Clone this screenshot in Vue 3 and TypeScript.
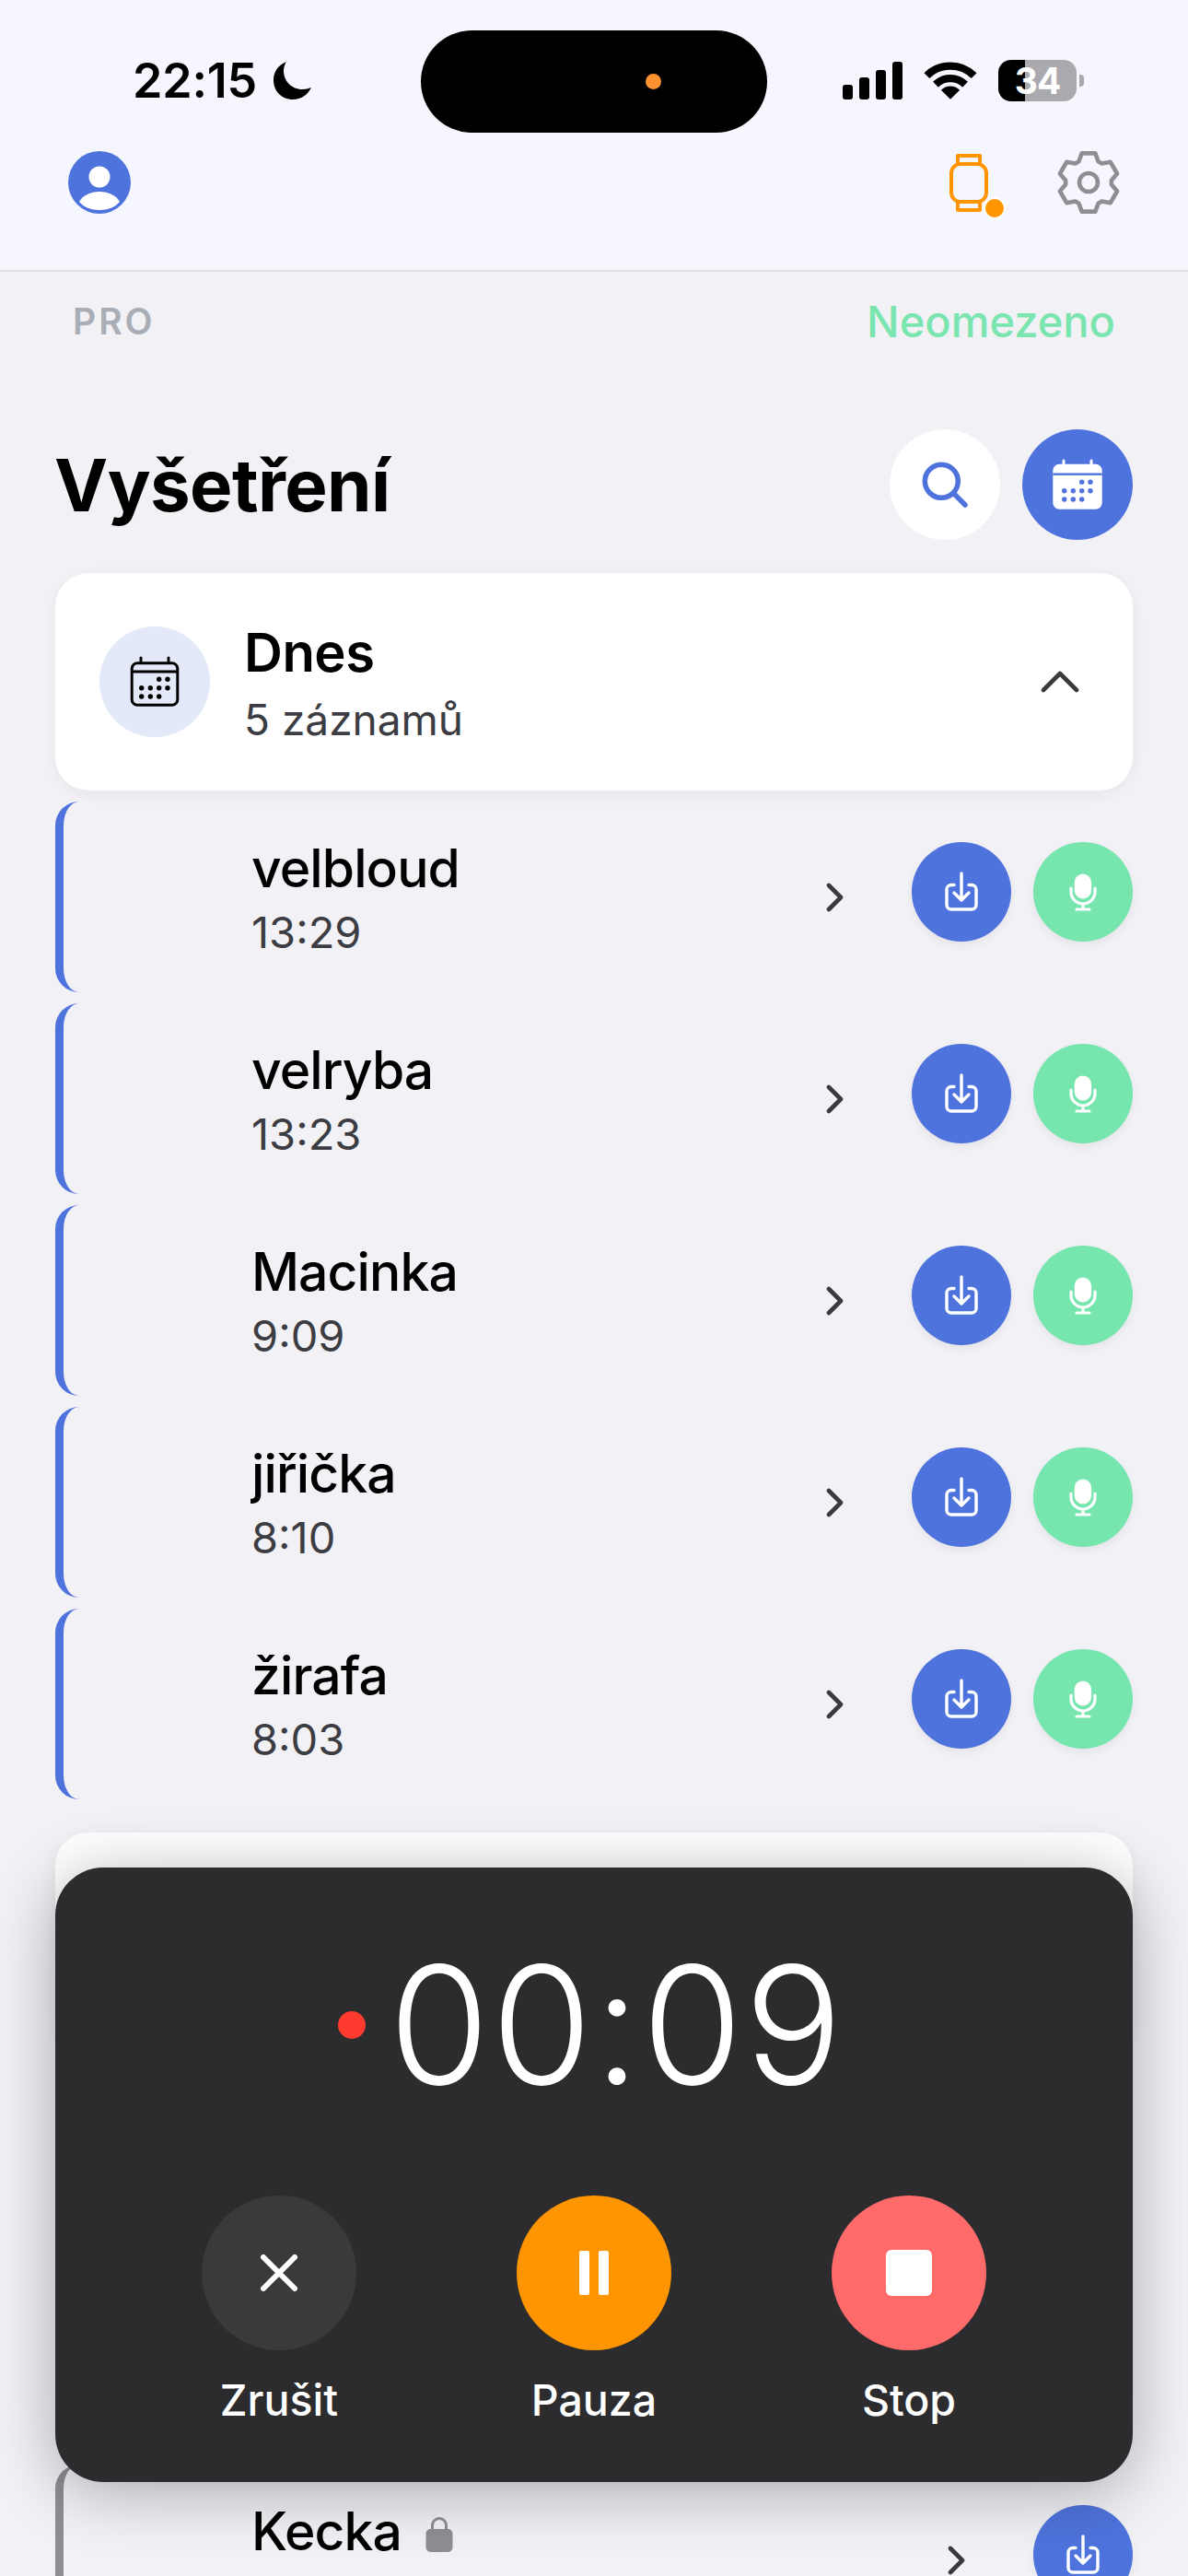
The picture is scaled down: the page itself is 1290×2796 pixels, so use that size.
<script setup lang="ts">
type Visit = { name: string; time: string; locked?: boolean }

const todayVisits: Visit[] = [
  { name: 'velbloud', time: '13:29' },
  { name: 'velryba', time: '13:23' },
  { name: 'Macinka', time: '9:09' },
  { name: 'jiřička', time: '8:10' },
  { name: 'žirafa', time: '8:03' },
]

const calendarDots = [
  [64.7, 57.3], [74, 57.3],
  [45.7, 66.7], [55.3, 66.7], [64.7, 66.7], [74, 66.7],
  [45.7, 76], [55.3, 76], [64.7, 76],
]

const polar = (deg: number, r: number) => {
  const a = ((deg - 90) * Math.PI) / 180
  return `${(40 + r * Math.cos(a)).toFixed(2)} ${(40 + r * Math.sin(a)).toFixed(2)}`
}

// six toothed cog, same outline all the way round
const gearPath = [0, 60, 120, 180, 240, 300]
  .map((a, i) => {
    const start = polar(a - 25, 25)
    return `${i === 0 ? 'M' : 'L'}${start} L${polar(a - 13, 32.5)} L${polar(a + 13, 32.5)} L${polar(a + 25, 25)}`
  })
  .join(' ') + ' Z'
</script>

<template>
  <div class="screen">
    <header class="top">
      <div class="island"><span class="island-dot"></span></div>
      <div class="status">
        <div class="clock">
          <span>22:15</span>
          <svg class="moon" viewBox="0 0 43 42" width="43" height="42">
            <path d="M15 1C5 5 1 13 1 21c0 12 9 21 21 21 9 0 16-5 20-13-3 1-6 2-10 2-11 0-20-9-20-20 0-4 1-7 3-10z" fill="#000" />
          </svg>
        </div>
        <div class="sys">
          <div class="signal">
            <i style="height: 16px"></i>
            <i style="height: 24px"></i>
            <i style="height: 32px"></i>
            <i style="height: 41px"></i>
          </div>
          <svg viewBox="0 0 60 44" width="58" height="43">
            <path d="M3.5 16.5a37.5 37.5 0 0 1 53 0M13.4 26.4a23.5 23.5 0 0 1 33.2 0" fill="none" stroke="#000" stroke-width="8.5" />
            <path d="M30 43 19.5 32.5a14.8 14.8 0 0 1 21 0z" fill="#000" />
          </svg>
          <div class="battery-wrap">
            <div class="battery">34</div>
            <span class="battery-tip"></span>
          </div>
        </div>
      </div>
      <div class="nav">
        <svg viewBox="0 0 68 70" width="68" height="70">
          <circle cx="34" cy="35" r="34" fill="#4f73dd" />
          <circle cx="34" cy="29" r="11.5" fill="#fff" />
          <path d="M12 56c4-7 12-11 22-11s18 4 22 11c-5 6-13 9-22 9s-17-3-22-9z" fill="#fff" />
        </svg>
        <div class="nav-right">
          <div class="watch">
            <svg viewBox="0 0 42 63" width="42" height="63" fill="none" stroke="#ff9500" stroke-width="4" stroke-linejoin="round">
              <path d="M9 11V2h24v9M9 52v9h24v-9" />
              <rect x="2" y="11" width="38" height="41" rx="10" />
            </svg>
            <span class="watch-dot"></span>
          </div>
          <svg viewBox="0 0 80 80" width="80" height="80" class="gear" fill="none" stroke="#8e8e93" stroke-width="4.6" stroke-linejoin="round">
            <path :d="gearPath" />
            <circle cx="40" cy="40" r="10" />
          </svg>
        </div>
      </div>
    </header>

    <div class="plan">
      <span class="plan-name">PRO</span>
      <span class="plan-state">Neomezeno</span>
    </div>

    <div class="title-row">
      <h1>Vyšetření</h1>
      <div class="title-actions">
        <button class="round white" type="button">
          <svg viewBox="0 0 120 120" width="120" height="120" fill="none" stroke="#4f73dd" stroke-width="5.5" stroke-linecap="round">
            <circle cx="56.3" cy="56.3" r="18" />
            <path d="M69.5 69.5 82 82" />
          </svg>
        </button>
        <button class="round blue" type="button">
          <svg viewBox="0 0 120 120" width="120" height="120">
            <path d="M45 39v-5M75 39v-5" stroke="#fff" stroke-width="3" stroke-linecap="round" />
            <rect x="33.3" y="37.7" width="53.4" height="49" rx="7" fill="#fff" />
            <rect x="33.3" y="47.5" width="53.4" height="2.4" fill="#4f73dd" />
            <circle v-for="d in calendarDots" :key="d.join()" :cx="d[0]" :cy="d[1]" r="2.7" fill="#4f73dd" />
          </svg>
        </button>
      </div>
    </div>

    <section class="day-card">
      <div class="day-icon">
        <svg viewBox="0 0 120 120" width="120" height="120">
          <path d="M45 39v-5M75 39v-5" stroke="#000" stroke-width="3" stroke-linecap="round" />
          <rect x="35.2" y="39.8" width="49.6" height="45.4" rx="6" fill="none" stroke="#000" stroke-width="3" />
          <rect x="35" y="47.5" width="50" height="3" fill="#000" />
          <circle v-for="d in calendarDots" :key="d.join()" :cx="d[0]" :cy="d[1]" r="2.7" fill="#000" />
        </svg>
      </div>
      <div class="day-text">
        <div class="day-name">Dnes</div>
        <div class="day-count">5 záznamů</div>
      </div>
      <svg viewBox="0 0 42 24" width="42" height="24" fill="none" stroke="#3a3a3c" stroke-width="4.6" stroke-linecap="round" stroke-linejoin="round">
        <path d="M3 21 21 3l18 18" />
      </svg>
    </section>

    <div class="visits">
      <article v-for="v in todayVisits" :key="v.name" class="visit">
        <div class="visit-text">
          <div class="visit-name">{{ v.name }}</div>
          <div class="visit-time">{{ v.time }}</div>
        </div>
        <svg class="chevron" viewBox="0 0 20 32" width="20" height="32" fill="none" stroke="#3a3a3c" stroke-width="4.6" stroke-linecap="round" stroke-linejoin="round">
          <path d="M3 3l13 13L3 29" />
        </svg>
        <div class="visit-actions">
          <button class="small blue" type="button">
            <svg viewBox="0 0 108 108" width="108" height="108" fill="none" stroke="#fff" stroke-width="3.4" stroke-linecap="round" stroke-linejoin="round">
              <path d="M46 46.5h-3a5 5 0 0 0-5 5V68a5 5 0 0 0 5 5h22a5 5 0 0 0 5-5V51.5a5 5 0 0 0-5-5h-3" />
              <path d="M54 34v29M46 55l8 8 8-8" />
            </svg>
          </button>
          <button class="small green" type="button">
            <svg viewBox="0 0 108 108" width="108" height="108" fill="none" stroke="#fff" stroke-width="3.2" stroke-linecap="round">
              <rect x="44.7" y="34.5" width="18.4" height="27" rx="9.2" fill="#fff" stroke="none" />
              <path d="M41 50v4a13 13 0 0 0 26 0v-4M54 67v6M47 73h14" />
            </svg>
          </button>
        </div>
      </article>
    </div>

    <section class="day-card"></section>

    <div class="visits-covered"></div>

    <article class="visit locked">
      <div class="visit-text">
        <div class="visit-name">
          Kecka
          <svg class="lock" viewBox="0 0 30 40" width="30" height="40">
            <path d="M7.5 18v-7a7.5 7.5 0 0 1 15 0v7" fill="none" stroke="#8e8e93" stroke-width="3" />
            <rect x="0.5" y="15" width="29" height="25" rx="5" fill="#8e8e93" />
          </svg>
        </div>
        <div class="visit-time">&nbsp;</div>
      </div>
      <svg class="chevron" viewBox="0 0 20 32" width="20" height="32" fill="none" stroke="#3a3a3c" stroke-width="4.6" stroke-linecap="round" stroke-linejoin="round">
        <path d="M3 3l13 13L3 29" />
      </svg>
      <div class="visit-actions">
        <button class="small blue" type="button">
          <svg viewBox="0 0 108 108" width="108" height="108" fill="none" stroke="#fff" stroke-width="3.4" stroke-linecap="round" stroke-linejoin="round">
            <path d="M46 46.5h-3a5 5 0 0 0-5 5V68a5 5 0 0 0 5 5h22a5 5 0 0 0 5-5V51.5a5 5 0 0 0-5-5h-3" />
            <path d="M54 34v29M46 55l8 8 8-8" />
          </svg>
        </button>
      </div>
    </article>

    <div class="recorder">
      <div class="timer">
        <span class="rec-dot"></span>
        <span class="timer-digits">00:09</span>
      </div>
      <div class="controls">
        <div class="control">
          <button class="ctl cancel" type="button">
            <svg viewBox="0 0 40 40" width="40" height="40" fill="none" stroke="#fff" stroke-width="6" stroke-linecap="round">
              <path d="M3 3l34 34M37 3 3 37" />
            </svg>
          </button>
          <span>Zrušit</span>
        </div>
        <div class="control">
          <button class="ctl pause" type="button">
            <i></i>
            <i></i>
          </button>
          <span>Pauza</span>
        </div>
        <div class="control">
          <button class="ctl stop" type="button"><i></i></button>
          <span>Stop</span>
        </div>
      </div>
    </div>
  </div>
</template>

<style>
html,
body {
  margin: 0;
  background: #f2f2f7;
}
</style>

<style scoped>
.screen {
  position: relative;
  width: 1290px;
  height: 2796px;
  overflow: hidden;
  background: #f1f1f6;
  font-family: Inter, "Noto Sans", sans-serif;
  color: #000;
}

button {
  border: 0;
  padding: 0;
  display: flex;
  align-items: center;
  justify-content: center;
  border-radius: 50%;
}

.top {
  position: relative;
  box-sizing: border-box;
  height: 295px;
  padding-top: 55px;
  background: #f6f6fe;
  border-bottom: 2px solid #dfdfe3;
}

.island {
  position: absolute;
  left: 457px;
  top: 33px;
  width: 376px;
  height: 111px;
  border-radius: 56px;
  background: #000;
}

.island-dot {
  position: absolute;
  left: 244px;
  top: 47px;
  width: 17px;
  height: 17px;
  border-radius: 50%;
  background: #ff9230;
}

.status {
  display: flex;
  justify-content: space-between;
  align-items: center;
  height: 64px;
  padding: 0 113px 0 144px;
}

.clock {
  display: flex;
  align-items: center;
  gap: 17px;
  font-size: 52px;
  font-weight: 600;
  letter-spacing: -0.2px;
}

.sys {
  display: flex;
  align-items: center;
  gap: 23px;
}

.signal {
  display: flex;
  align-items: flex-end;
  gap: 7px;
  height: 41px;
  margin-top: 1px;
}

.signal i {
  width: 11px;
  border-radius: 3px;
  background: #000;
}

.battery-wrap {
  display: flex;
  align-items: center;
  gap: 3px;
}

.battery {
  width: 85px;
  height: 45px;
  border-radius: 14px;
  background: linear-gradient(90deg, #000 34%, #aaaaae 34%);
  color: #fff;
  font-size: 39px;
  font-weight: 700;
  line-height: 45px;
  text-align: center;
  letter-spacing: -1px;
}

.battery-tip {
  width: 5px;
  height: 13px;
  border-radius: 0 4px 4px 0;
  background: #aaaaae;
}

.nav {
  display: flex;
  justify-content: space-between;
  align-items: center;
  height: 70px;
  margin-top: 44px;
  padding: 0 68px 0 74px;
}

.nav-right {
  display: flex;
  align-items: center;
  gap: 69px;
}

.watch {
  position: relative;
  width: 42px;
  height: 63px;
}

.watch-dot {
  position: absolute;
  left: 39px;
  top: 49px;
  width: 20px;
  height: 20px;
  border-radius: 50%;
  background: #ff9500;
  box-shadow: 0 0 0 2px #fff;
}

.plan {
  display: flex;
  justify-content: space-between;
  align-items: center;
  height: 44px;
  margin-top: 31px;
  padding: 0 79px;
}

.plan-name {
  font-size: 39px;
  font-weight: 600;
  letter-spacing: 3px;
  color: #a9adb5;
}

.plan-state {
  font-size: 47px;
  font-weight: 500;
  color: #7be5b0;
}

.title-row {
  display: flex;
  justify-content: space-between;
  align-items: center;
  height: 120px;
  margin-top: 96px;
  padding: 0 60px 0 59px;
}

h1 {
  margin: 0;
  font-size: 78px;
  font-weight: 700;
  letter-spacing: -0.6px;
}

.title-actions {
  display: flex;
  gap: 24px;
}

.round {
  width: 120px;
  height: 120px;
}

.white {
  background: #fff;
}

.blue {
  background: #4f73dd;
}

.green {
  background: #76e5ae;
}

.day-card {
  display: flex;
  align-items: center;
  box-sizing: border-box;
  height: 236px;
  margin: 36px 60px 0;
  padding: 0 58px 0 48px;
  border-radius: 36px;
  background: #fff;
  box-shadow: 0 4px 18px rgba(0, 0, 0, 0.05);
}

.day-icon {
  display: flex;
  width: 120px;
  height: 120px;
  border-radius: 50%;
  background: #e3e9f8;
}

.day-text {
  flex: 1;
  margin-left: 37px;
  padding-top: 9px;
}

.day-name {
  font-size: 58px;
  font-weight: 600;
  line-height: 68px;
  letter-spacing: -0.5px;
}

.day-count {
  margin-top: 5px;
  font-size: 46px;
  line-height: 68px;
  color: #3c3c43;
}

.visits {
  display: flex;
  flex-direction: column;
  gap: 12px;
  margin-top: 12px;
}

.visit {
  display: flex;
  align-items: center;
  box-sizing: border-box;
  height: 207px;
  margin: 0 60px;
  padding-left: 204px;
  border-left: 9px solid #4f73dd;
  border-radius: 26px;
}

.visit.locked {
  border-left-color: #8e8e93;
}

.visit-text {
  flex: 1;
  padding-top: 8px;
}

.visit-name {
  display: flex;
  align-items: center;
  font-size: 57px;
  font-weight: 500;
  line-height: 66px;
  letter-spacing: -0.9px;
}

.lock {
  margin-left: 26px;
  margin-top: 4px;
}

.visit-time {
  margin-top: 3px;
  font-size: 47px;
  line-height: 66px;
  color: #3c3c43;
}

.chevron {
  flex: none;
}

.visit-actions {
  display: flex;
  gap: 24px;
  margin-left: 73px;
  margin-bottom: 11px;
}

.small {
  width: 108px;
  height: 108px;
  box-shadow: 0 4px 10px rgba(0, 0, 0, 0.06);
}

.visits-covered {
  height: 438px;
  margin-top: 12px;
}

.recorder {
  position: absolute;
  left: 60px;
  right: 60px;
  bottom: 102px;
  height: 667px;
  border-radius: 52px;
  background: #2c2c2e;
  box-shadow: 0 10px 70px rgba(0, 0, 0, 0.3);
}

.timer {
  display: flex;
  align-items: center;
  justify-content: center;
  gap: 25px;
  height: 180px;
  margin-top: 81px;
  margin-right: 6px;
  color: #fff;
}

.rec-dot {
  width: 30px;
  height: 30px;
  border-radius: 50%;
  background: #ff3b30;
}

.timer-digits {
  font-size: 177px;
  font-weight: 300;
  line-height: 180px;
  letter-spacing: 2px;
}

.controls {
  display: grid;
  grid-template-columns: repeat(3, 1fr);
  margin-top: 95px;
  padding: 0 72px;
}

.control {
  display: flex;
  flex-direction: column;
  align-items: center;
  gap: 26px;
  color: #fff;
  font-size: 46.5px;
  font-weight: 500;
  line-height: 56px;
}

.ctl {
  gap: 10px;
  width: 168px;
  height: 168px;
}

.cancel {
  background: #3a3a3c;
}

.pause {
  background: #ff9500;
}

.pause i {
  width: 11px;
  height: 48px;
  border-radius: 2px;
  background: #fff;
}

.stop {
  background: #ff6b6b;
}

.stop i {
  width: 50px;
  height: 50px;
  border-radius: 6px;
  background: #fff;
}
</style>
